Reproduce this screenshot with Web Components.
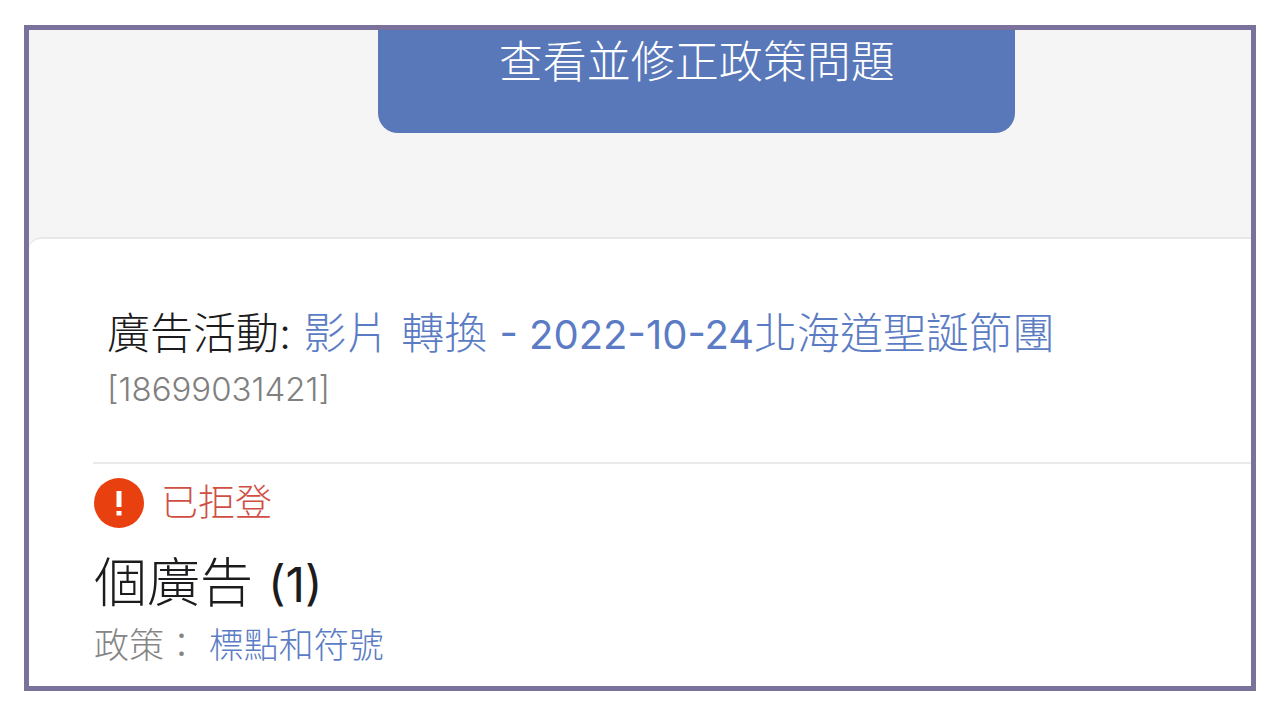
<!DOCTYPE html>
<html lang="zh-Hant">
<head>
<meta charset="utf-8">
<meta name="viewport" content="width=device-width, initial-scale=1">
<title>政策問題</title>
<style>
  html { background: #fff; }
  body {
    margin: 0;
    font-family: Inter, "Noto Sans CJK TC", sans-serif;
    font-weight: 300;
    color: #1c1c1e;
  }
  .latin { font-weight: 400; }
  .date { font-size: 40px; }
  .count { font-size: 48px; }
</style>
</head>
<body>
<policy-frame>
  <policy-banner slot="banner">查看並修正政策問題</policy-banner>
  <campaign-card>
    <campaign-heading number="[18699031421]">
      <span slot="label">廣告活動:</span>
      <text-link>影片 轉換 <span class="latin date">- 2022-10-24</span>北海道聖誕節團</text-link>
    </campaign-heading>
    <ad-issue slot="issue">
      <status-badge slot="status">已拒登</status-badge>
      <span slot="title">個廣告 <span class="latin count">(1)</span></span>
      <span slot="label">政策：</span>
      <text-link slot="policy">標點和符號</text-link>
    </ad-issue>
  </campaign-card>
</policy-frame>

<script>
const define = (name, markup, setup) => {
  const template = document.createElement('template');
  template.innerHTML = markup;
  customElements.define(name, class extends HTMLElement {
    constructor() {
      super();
      this.attachShadow({ mode: 'open' }).append(template.content.cloneNode(true));
    }
    connectedCallback() {
      if (setup) setup(this);
    }
  });
};

define('policy-frame', `
  <style>
    :host { box-sizing: border-box; min-height: 100vh; padding: 25px 24px 29px; display: flex; }
    main {
      flex: 1; min-width: 0; box-sizing: border-box; display: flex; flex-direction: column;
      border: 5px solid #7a719d; background: #f5f5f5; overflow: hidden;
    }
    ::slotted(campaign-card) { flex: 1; }
  </style>
  <main><slot name="banner"></slot><slot></slot></main>
`);

define('policy-banner', `
  <style>
    :host { display: grid; grid-template-columns: 286fr 521fr 193fr; padding-bottom: 104px; }
    button {
      grid-column: 2; box-sizing: border-box; margin: 0; border: 0; padding: 0 0 39px;
      border-radius: 0 0 20px 20px; background: #5878b9; color: #fff;
      font: inherit; font-size: 44px; line-height: 64px; white-space: nowrap;
    }
  </style>
  <button type="button"><slot></slot></button>
`);

define('campaign-card', `
  <style>
    :host {
      display: block; box-sizing: border-box; padding: 66px 0 8px 64px;
      border-top: 2px solid #e8e8e8; border-radius: 12px 0 0 0; background: #fff;
    }
  </style>
  <slot></slot><slot name="issue"></slot>
`);

define('campaign-heading', `
  <style>
    :host { display: block; padding: 0 0 46px 14px; border-bottom: 2px solid #e8eaec; }
    h1 { margin: 0; font: inherit; font-size: 43px; line-height: 56px; white-space: nowrap; }
    p { margin: 0; color: #808080; font-size: 33px; line-height: 53px; }
  </style>
  <h1><slot name="label"></slot> <slot></slot></h1>
  <p></p>
`, el => { el.shadowRoot.querySelector('p').textContent = el.getAttribute('number'); });

define('text-link', `
  <style>
    :host { display: inline; }
    a { color: #5b7cc4; text-decoration: none; }
  </style>
  <a href="#"><slot></slot></a>
`);

define('status-badge', `
  <style>
    :host { display: flex; align-items: center; gap: 17px; color: #cf4f45; font-size: 37px; line-height: 50px; }
    svg { display: block; width: 50px; height: 50px; }
  </style>
  <svg viewBox="0 0 50 50" aria-hidden="true">
    <circle cx="25" cy="25" r="25" fill="#e8400f"/>
    <path d="M22.5 13h5v16h-5zM22.5 33h5v4.500h-5z" fill="#fff"/>
  </svg>
  <span><slot></slot></span>
`);

define('ad-issue', `
  <style>
    :host { display: block; padding: 14px 0 0 1px; }
    h2 { margin: 20px 0 0; font: inherit; font-size: 53px; line-height: 70px; }
    p { margin: 0; color: #858585; font-size: 35px; line-height: 50px; }
  </style>
  <slot name="status"></slot>
  <h2><slot name="title"></slot></h2>
  <p><slot name="label"></slot> <slot name="policy"></slot></p>
`);
</script>
</body>
</html>
